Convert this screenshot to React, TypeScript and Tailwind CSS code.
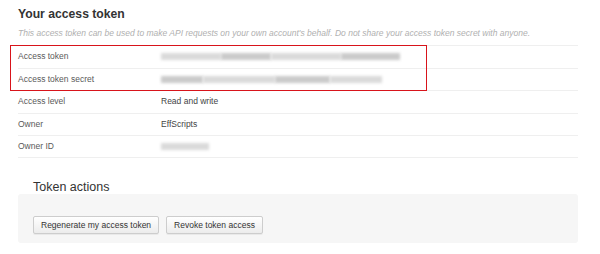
const font = { fontFamily: '"Liberation Sans", Arial, sans-serif' };

function Blur({ w, dark = false }: { w: number; dark?: boolean }) {
  return (
    <div
      className={`h-[7px] blur-[1.6px] ${dark ? "bg-[#cacaca]" : "bg-[#dadada]"}`}
      style={{ width: w }}
    />
  );
}

function Row({
  label,
  children,
  last = false,
}: {
  label: string;
  children: React.ReactNode;
  last?: boolean;
}) {
  return (
    <div
      className={`flex items-center h-[22.5px] border-t border-[#efefef] ${last ? "border-b" : ""}`}
    >
      <div className="w-[143px] text-[8.5px] text-[#5a5a5a]">{label}</div>
      <div className="text-[8.5px] text-[#444]">{children}</div>
    </div>
  );
}

export default function App() {
  return (
    <div className="w-[600px] h-[254px] bg-white overflow-hidden" style={font}>
      <div className="pl-[18px] pr-[22px] pt-[7px]">
        <h1 className="text-[12.2px] leading-[15px] font-bold text-[#333]">Your access token</h1>
        <p className="mt-[5px] text-[8.5px] leading-[12px] italic text-[#b0b0b0]">
          This access token can be used to make API requests on your own account's behalf. Do not
          share your access token secret with anyone.
        </p>

        <div className="mt-[6px]">
          <div className="relative">
            <Row label="Access token">
              <div className="flex">
                <Blur w={60} />
                <Blur w={50} dark />
                <Blur w={70} />
                <Blur w={59} dark />
              </div>
            </Row>
            <Row label="Access token secret">
              <div className="flex">
                <Blur w={42} dark />
                <Blur w={72} />
                <Blur w={55} dark />
                <Blur w={52} />
              </div>
            </Row>
            <div className="absolute left-[-8px] top-0 w-[417px] h-[46px] border border-[#d8141b]" />
          </div>
          <Row label="Access level">Read and write</Row>
          <Row label="Owner">EffScripts</Row>
          <Row label="Owner ID" last>
            <Blur w={48} />
          </Row>
        </div>

        <h2 className="mt-[23.5px] pl-[15px] text-[12.5px] leading-[13px] text-[#333]">
          Token actions
        </h2>
        <div className="h-[49px] rounded-[3px] bg-[#f6f6f6] pl-[15px] pt-[22px] flex gap-[7px] items-start">
          <button className="h-[18px] px-[7px] rounded-[2px] border border-[#cdcdcd] bg-gradient-to-b from-white to-[#ececec] text-[8.5px] text-[#333] shadow-[0_1px_0_rgba(0,0,0,0.05)]">
            Regenerate my access token
          </button>
          <button className="h-[18px] px-[7px] rounded-[2px] border border-[#cdcdcd] bg-gradient-to-b from-white to-[#ececec] text-[8.5px] text-[#333] shadow-[0_1px_0_rgba(0,0,0,0.05)]">
            Revoke token access
          </button>
        </div>
      </div>
    </div>
  );
}
